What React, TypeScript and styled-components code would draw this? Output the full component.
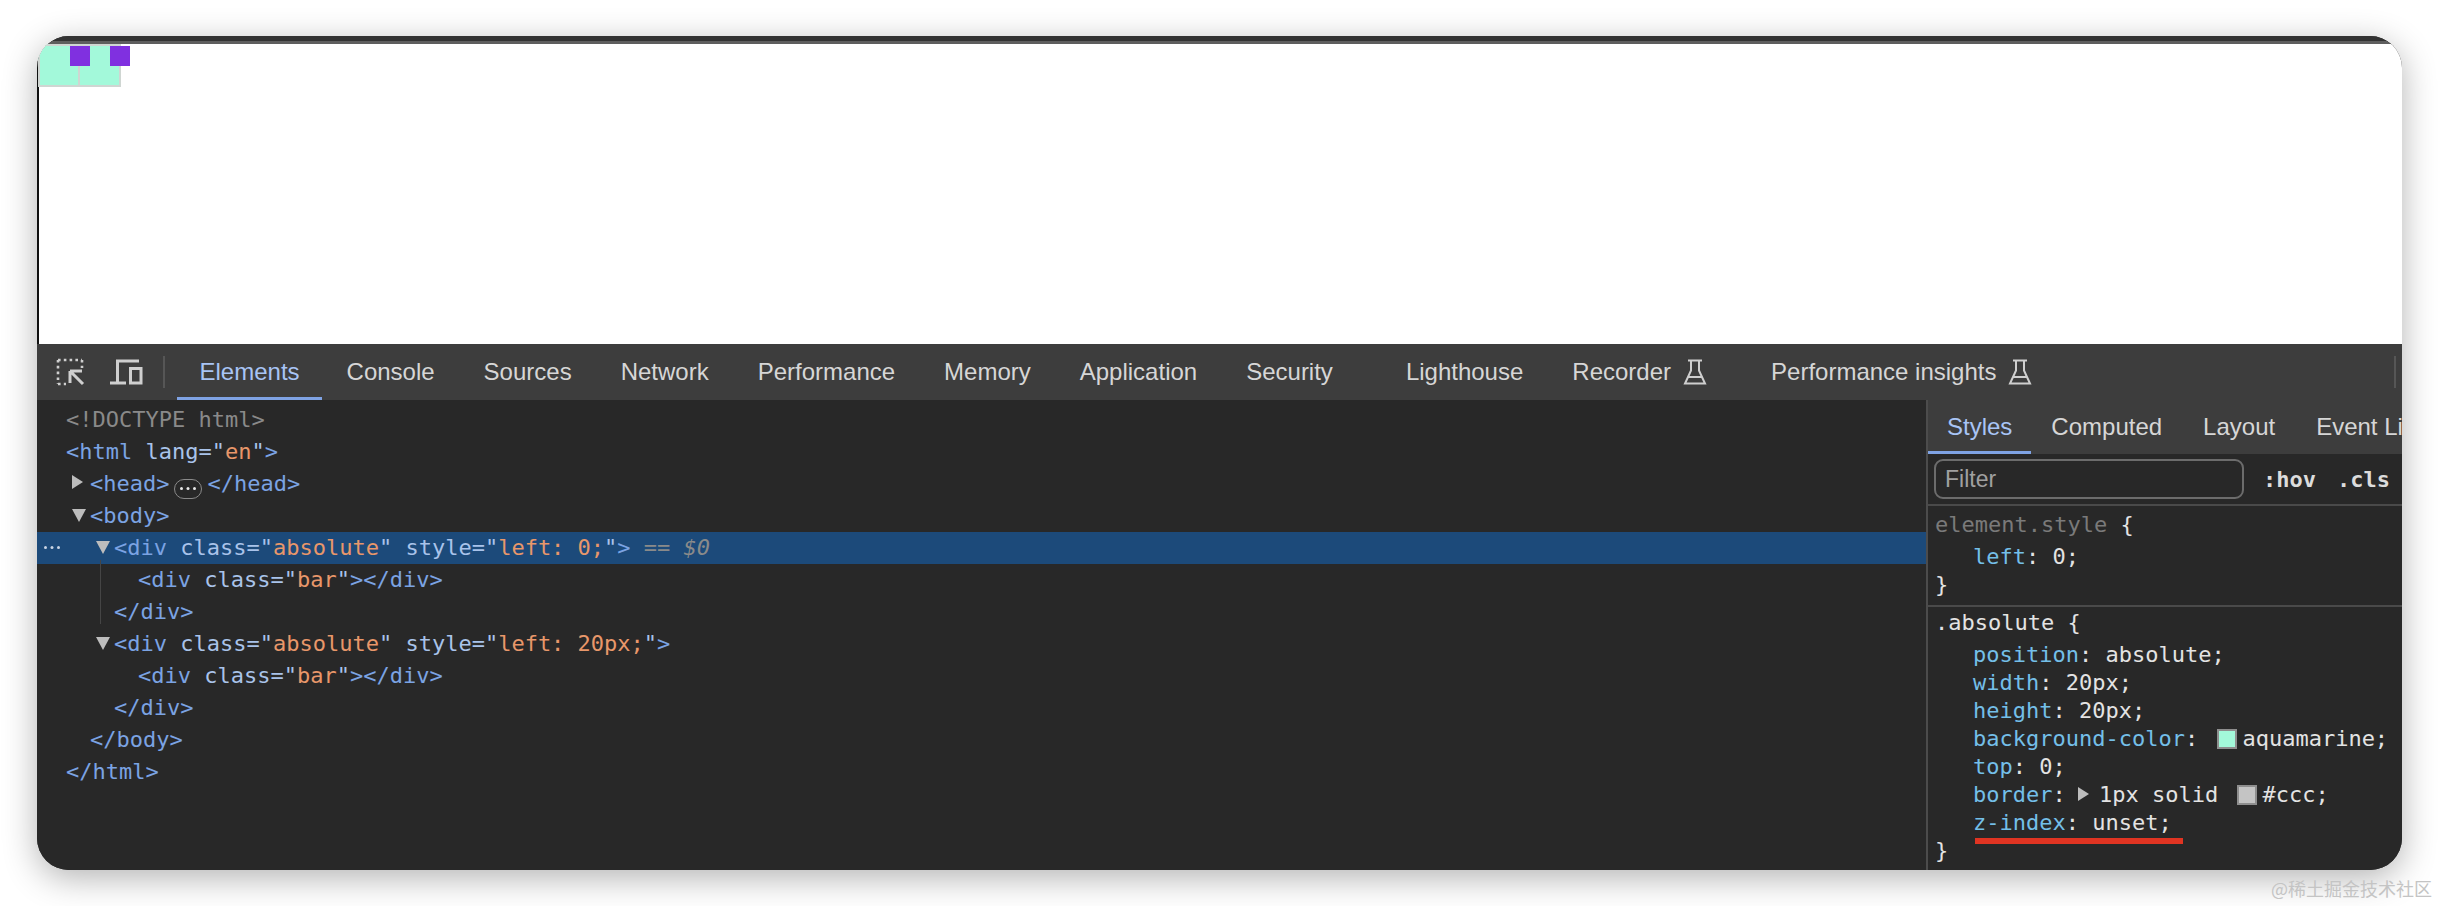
import styled, { createGlobalStyle } from "styled-components";

const GlobalStyle = createGlobalStyle`
  html, body {
    margin: 0;
    padding: 0;
    background: #fff;
  }
`;

const Page = styled.div`
  width: 2438px;
  height: 906px;
  overflow: hidden;
  box-sizing: border-box;
  padding: 36px 36px 0 37px;
  display: flex;
  flex-direction: column;
`;

const Window = styled.div`
  height: 834px;
  flex-shrink: 0;
  display: flex;
  flex-direction: column;
  border-radius: 32px;
  overflow: hidden;
  background: #282828;
  box-shadow: 0 8px 34px rgba(0, 0, 0, 0.3);
`;

const TitleEdge = styled.div`
  height: 8px;
  flex-shrink: 0;
  box-sizing: border-box;
  background: #333;
  border-bottom: 3px solid #5e5e5e;
`;

const Viewport = styled.div`
  position: relative;
  height: 300px;
  flex-shrink: 0;
  background: #fff;
  border-left: 2px solid #111;
`;

const DemoBox = styled.div<{ $left: number }>`
  position: absolute;
  top: 0;
  left: ${(p) => p.$left}px;
  width: 43px;
  height: 43px;
  box-sizing: border-box;
  background: #a3f9da;
  border: 2px solid #cfd6d2;
`;

const DemoBar = styled.div`
  position: absolute;
  top: 0;
  left: 30px;
  width: 20px;
  height: 20px;
  z-index: 1;
  background: #8030e0;
`;

const Toolbar = styled.div`
  height: 56px;
  flex-shrink: 0;
  display: flex;
  align-items: stretch;
  background: #3d3d3d;
  padding-left: 17px;
  white-space: nowrap;
`;

const ToolIcon = styled.div<{ $width: number; $gap?: number }>`
  width: ${(p) => p.$width}px;
  margin-left: ${(p) => p.$gap ?? 0}px;
  display: flex;
  align-items: center;
  justify-content: center;
  flex-shrink: 0;
`;

const Divider = styled.div<{ $left: number }>`
  width: 2px;
  height: 32px;
  align-self: center;
  flex-shrink: 0;
  margin: 0 12px 0 ${(p) => p.$left}px;
  background: #565656;
`;

const Tab = styled.div<{ $active?: boolean; $gap?: number; $pad?: number }>`
  display: flex;
  align-items: center;
  gap: 12px;
  flex-shrink: 0;
  box-sizing: border-box;
  margin-left: ${(p) => p.$gap ?? 0}px;
  padding: 0 ${(p) => p.$pad ?? 24.5}px;
  font-family: "Liberation Sans", Arial, sans-serif;
  font-size: 24px;
  color: ${(p) => (p.$active ? "#a8c4f5" : "#d6d6d6")};
  border-bottom: 3px solid ${(p) => (p.$active ? "#7fa3e4" : "transparent")};
  padding-top: 3px;
`;

const ToolbarEnd = styled.div`
  margin-left: auto;
  margin-right: 6px;
  width: 2px;
  height: 32px;
  align-self: center;
  background: #565656;
`;

const Panes = styled.div`
  flex: 1;
  display: flex;
  min-height: 0;
`;

const ElementsPane = styled.div`
  flex: 1;
  padding-top: 4px;
  position: relative;
  font-family: "DejaVu Sans Mono", monospace;
  font-size: 22px;
  background: #282828;
`;

const TreeRow = styled.div<{ $indent: number; $selected?: boolean }>`
  position: relative;
  height: 32px;
  line-height: 32px;
  box-sizing: border-box;
  padding-left: ${(p) => p.$indent}px;
  white-space: pre;
  background: ${(p) => (p.$selected ? "#1c4a7a" : "transparent")};
`;

const Guide = styled.div`
  position: absolute;
  left: 63px;
  top: 160px;
  width: 1px;
  height: 64px;
  background: #454545;
`;

const Caret = styled.span<{ $open?: boolean }>`
  display: inline-block;
  width: 0;
  height: 0;
  margin-left: -18px;
  margin-right: ${(p) => (p.$open ? 4 : 7)}px;
  vertical-align: ${(p) => (p.$open ? "1px" : "2px")};
  ${(p) =>
    p.$open
      ? "border-left: 7px solid transparent; border-right: 7px solid transparent; border-top: 13px solid #bdbdbd;"
      : "border-top: 7px solid transparent; border-bottom: 7px solid transparent; border-left: 11px solid #bdbdbd;"}
`;

const Tag = styled.span`
  color: #7ba3e3;
`;

const Attr = styled.span`
  color: #a9c3ea;
`;

const AttrValue = styled.span`
  color: #e8976a;
`;

const Muted = styled.span<{ $italic?: boolean }>`
  color: #8a8a8a;
  font-style: ${(p) => (p.$italic ? "italic" : "normal")};
`;

const Ellipsis = styled.span`
  display: inline-flex;
  align-items: center;
  justify-content: center;
  width: 26px;
  height: 18px;
  margin: 0 5px 0 5px;
  border: 1.5px solid #8a8a8a;
  border-radius: 10px;
  vertical-align: 1px;
`;

const RowDots = styled.span`
  position: absolute;
  left: 6px;
  top: 14px;
  display: flex;
`;

const StylesPane = styled.div`
  width: 476px;
  flex-shrink: 0;
  box-sizing: border-box;
  border-left: 2px solid #4c4c4c;
  overflow: hidden;
  background: #282828;
  font-family: "DejaVu Sans Mono", monospace;
  font-size: 22px;
  color: #e3e3e3;
`;

const StyleTabs = styled.div`
  height: 54px;
  display: flex;
  align-items: stretch;
  background: #3d3d3d;
  white-space: nowrap;
`;

const FilterRow = styled.div`
  height: 52px;
  box-sizing: border-box;
  display: flex;
  align-items: center;
  padding: 0 0 0 6px;
  border-bottom: 2px solid #4a4a4a;
`;

const FilterInput = styled.div`
  width: 310px;
  height: 40px;
  box-sizing: border-box;
  display: flex;
  align-items: center;
  padding-left: 9px;
  border: 2px solid #6c6c6c;
  border-radius: 9px;
  font-family: "Liberation Sans", Arial, sans-serif;
  font-size: 23px;
  color: #a0a0a0;
`;

const FilterFlag = styled.span<{ $left: number }>`
  margin-left: ${(p) => p.$left}px;
  font-weight: bold;
  color: #dcdcdc;
`;

const Rule = styled.div<{ $top: number; $bottom: number; $line?: boolean }>`
  padding: ${(p) => p.$top}px 0 ${(p) => p.$bottom}px 7px;
  border-bottom: ${(p) => (p.$line ? "2px solid #4a4a4a" : "none")};
`;

const Selector = styled.div`
  height: 32px;
  line-height: 32px;
  margin-bottom: 2px;
`;

const FadedSelector = styled.span`
  color: #7a7a7a;
`;

const Decl = styled.div`
  position: relative;
  height: 28px;
  line-height: 28px;
  padding-left: 38px;
  white-space: pre;
`;

const Closing = styled.div`
  height: 28px;
  line-height: 28px;
`;

const Prop = styled.span`
  color: #74bfe8;
`;

const Swatch = styled.span<{ $color: string }>`
  display: inline-block;
  width: 20px;
  height: 20px;
  box-sizing: border-box;
  margin: 0 5px 0 6px;
  vertical-align: -3px;
  background: ${(p) => p.$color};
  border: 2px solid #8e8e8e;
`;

const ShorthandArrow = styled.span`
  display: inline-block;
  width: 0;
  height: 0;
  margin: 0 10px 0 -1px;
  vertical-align: 1px;
  border-top: 7px solid transparent;
  border-bottom: 7px solid transparent;
  border-left: 11px solid #bdbdbd;
`;

const RedMark = styled.div`
  position: absolute;
  left: 40px;
  top: 29px;
  width: 208px;
  height: 6px;
  background: #e03422;
`;

const Watermark = styled.div`
  align-self: flex-end;
  margin: 5px -30px 0 0;
  font-family: "Noto Sans CJK SC", "Liberation Sans", sans-serif;
  font-size: 18px;
  line-height: 26px;
  color: #c4c4c4;
`;

const Dots = ({ color, size }: { color: string; size: number }) => (
  <svg width={size * 6} height={size} viewBox="0 0 18 3" fill={color}>
    <circle cx="2.5" cy="1.5" r="1.5" />
    <circle cx="9" cy="1.5" r="1.5" />
    <circle cx="15.5" cy="1.5" r="1.5" />
  </svg>
);

const InspectIcon = () => (
  <svg width="30" height="30" viewBox="0 0 30 30" fill="none" stroke="#cfcfcf">
    <path
      d="M3 3h24M3 3v24M27 3v8M3 27h8"
      strokeWidth="2.6"
      strokeDasharray="2.6 3.2"
    />
    <path d="M15 14h12M15 14v12M15.5 14.5L28 27" strokeWidth="3" />
  </svg>
);

const DeviceIcon = () => (
  <svg width="34" height="26" viewBox="0 0 34 26" fill="none" stroke="#cfcfcf">
    <path d="M30 2H8.5v22M1 24h16" strokeWidth="3" />
    <rect x="21.5" y="9.5" width="10.5" height="14.5" strokeWidth="3" />
  </svg>
);

const FlaskIcon = () => (
  <svg width="24" height="26" viewBox="0 0 24 26" fill="none" stroke="#cfcfcf" strokeWidth="2">
    <path d="M5 1.5h14M8 1.5v10L2 24.5h20L16 11.5v-10M5.5 18h13" />
  </svg>
);

const divOpen = (name: string, style?: string) => (
  <>
    <Tag>&lt;div</Tag> <Attr>class=&quot;</Attr>
    <AttrValue>{name}</AttrValue>
    <Attr>&quot;</Attr>
    {style && (
      <>
        {" "}
        <Attr>style=&quot;</Attr>
        <AttrValue>{style}</AttrValue>
        <Attr>&quot;</Attr>
      </>
    )}
    <Tag>&gt;</Tag>
  </>
);

const App = () => {
  return (
    <Page>
      <GlobalStyle />
      <Window>
        <TitleEdge />
        <Viewport>
          <DemoBox $left={-1}>
            <DemoBar />
          </DemoBox>
          <DemoBox $left={39}>
            <DemoBar />
          </DemoBox>
        </Viewport>
        <Toolbar>
          <ToolIcon $width={32}>
            <InspectIcon />
          </ToolIcon>
          <ToolIcon $width={34} $gap={23}>
            <DeviceIcon />
          </ToolIcon>
          <Divider $left={20} />
          <Tab $active $pad={22.5}>Elements</Tab>
          <Tab>Console</Tab>
          <Tab>Sources</Tab>
          <Tab>Network</Tab>
          <Tab>Performance</Tab>
          <Tab>Memory</Tab>
          <Tab>Application</Tab>
          <Tab>Security</Tab>
          <Tab $gap={24}>Lighthouse</Tab>
          <Tab>
            Recorder
            <FlaskIcon />
          </Tab>
          <Tab $gap={15}>
            Performance insights
            <FlaskIcon />
          </Tab>
          <ToolbarEnd />
        </Toolbar>
        <Panes>
          <ElementsPane>
            <TreeRow $indent={29}>
              <Muted>&lt;!DOCTYPE html&gt;</Muted>
            </TreeRow>
            <TreeRow $indent={29}>
              <Tag>&lt;html</Tag> <Attr>lang=&quot;</Attr>
              <AttrValue>en</AttrValue>
              <Attr>&quot;</Attr>
              <Tag>&gt;</Tag>
            </TreeRow>
            <TreeRow $indent={53}>
              <Caret />
              <Tag>&lt;head&gt;</Tag>
              <Ellipsis>
                <Dots color="#e8e8e8" size={3} />
              </Ellipsis>
              <Tag>&lt;/head&gt;</Tag>
            </TreeRow>
            <TreeRow $indent={53}>
              <Caret $open />
              <Tag>&lt;body&gt;</Tag>
            </TreeRow>
            <TreeRow $indent={77} $selected>
              <RowDots>
                <Dots color="#c8d4e4" size={3} />
              </RowDots>
              <Caret $open />
              {divOpen("absolute", "left: 0;")}
              <Muted> == </Muted>
              <Muted $italic>$0</Muted>
            </TreeRow>
            <TreeRow $indent={101}>{divOpen("bar")}<Tag>&lt;/div&gt;</Tag></TreeRow>
            <TreeRow $indent={77}>
              <Tag>&lt;/div&gt;</Tag>
            </TreeRow>
            <TreeRow $indent={77}>
              <Caret $open />
              {divOpen("absolute", "left: 20px;")}
            </TreeRow>
            <TreeRow $indent={101}>{divOpen("bar")}<Tag>&lt;/div&gt;</Tag></TreeRow>
            <TreeRow $indent={77}>
              <Tag>&lt;/div&gt;</Tag>
            </TreeRow>
            <TreeRow $indent={53}>
              <Tag>&lt;/body&gt;</Tag>
            </TreeRow>
            <TreeRow $indent={29}>
              <Tag>&lt;/html&gt;</Tag>
            </TreeRow>
            <Guide />
          </ElementsPane>
          <StylesPane>
            <StyleTabs>
              <Tab $active $pad={19}>Styles</Tab>
              <Tab $pad={20}>Computed</Tab>
              <Tab $pad={21}>Layout</Tab>
              <Tab $pad={20}>Event Listeners</Tab>
            </StyleTabs>
            <FilterRow>
              <FilterInput>Filter</FilterInput>
              <FilterFlag $left={19}>:hov</FilterFlag>
              <FilterFlag $left={21}>.cls</FilterFlag>
            </FilterRow>
            <Rule $top={3} $bottom={6} $line>
              <Selector>
                <FadedSelector>element.style</FadedSelector> {"{"}
              </Selector>
              <Decl>
                <Prop>left</Prop>: 0;
              </Decl>
              <Closing>{"}"}</Closing>
            </Rule>
            <Rule $top={0} $bottom={0}>
              <Selector>.absolute {"{"}</Selector>
              <Decl>
                <Prop>position</Prop>: absolute;
              </Decl>
              <Decl>
                <Prop>width</Prop>: 20px;
              </Decl>
              <Decl>
                <Prop>height</Prop>: 20px;
              </Decl>
              <Decl>
                <Prop>background-color</Prop>:{" "}
                <Swatch $color="#a3f9da" />
                aquamarine;
              </Decl>
              <Decl>
                <Prop>top</Prop>: 0;
              </Decl>
              <Decl>
                <Prop>border</Prop>: <ShorthandArrow />
                1px solid{" "}
                <Swatch $color="#c4c4c4" />
                #ccc;
              </Decl>
              <Decl>
                <Prop>z-index</Prop>: unset;
                <RedMark />
              </Decl>
              <Closing>{"}"}</Closing>
            </Rule>
          </StylesPane>
        </Panes>
      </Window>
      <Watermark>@稀土掘金技术社区</Watermark>
    </Page>
  );
};

export default App;
